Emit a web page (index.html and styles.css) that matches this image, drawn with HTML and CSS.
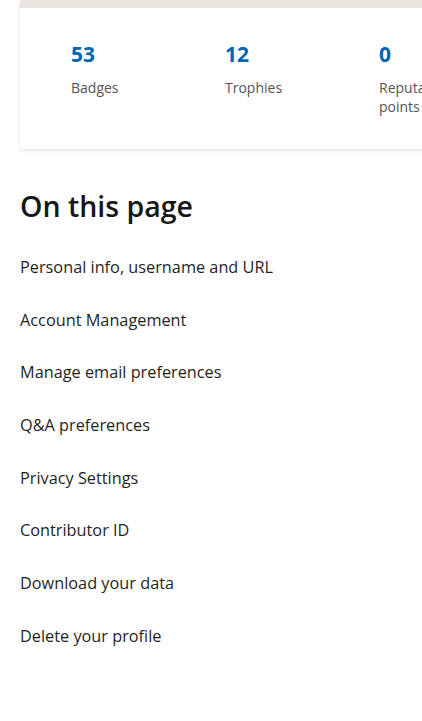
FILE: index.html
```html
<!DOCTYPE html>
<html lang="en">
<head>
<meta charset="utf-8">
<title>Profile</title>
<link rel="stylesheet" href="styles.css">
</head>
<body>
<main class="page">
  <section class="card">
    <div class="banner"></div>
    <div class="stats">
      <div class="stat">
        <div class="stat-value">53</div>
        <div class="stat-label">Badges</div>
      </div>
      <div class="stat">
        <div class="stat-value">12</div>
        <div class="stat-label">Trophies</div>
      </div>
      <div class="stat">
        <div class="stat-value">0</div>
        <div class="stat-label">Reputation points</div>
      </div>
    </div>
  </section>
  <nav class="toc">
    <h2 class="toc-title">On this page</h2>
    <ul class="toc-list">
      <li><a href="#">Personal info, username and URL</a></li>
      <li><a href="#">Account Management</a></li>
      <li><a href="#">Manage email preferences</a></li>
      <li><a href="#">Q&amp;A preferences</a></li>
      <li><a href="#">Privacy Settings</a></li>
      <li><a href="#">Contributor ID</a></li>
      <li><a href="#">Download your data</a></li>
      <li><a href="#">Delete your profile</a></li>
    </ul>
  </nav>
</main>
</body>
</html>
```
FILE: styles.css
```css
html, body {
  margin: 0;
  padding: 0;
  overflow: hidden;
  background: #ffffff;
}
body {
  font-family: "Open Sans", "Noto Sans", sans-serif;
  color: #171717;
  width: 422px;
  height: 721px;
}
.page {
  padding-left: 20px;
}
.card {
  width: 480px;
  background: #ffffff;
  box-shadow: 0 1.6px 3.6px rgba(0,0,0,0.13), 0 0.3px 0.9px rgba(0,0,0,0.11);
}
.banner {
  height: 8px;
  background: #e8e6df;
}
.stats {
  display: grid;
  grid-template-columns: 154px 154px 110px;
  padding: 32px 0 33px 51px;
}
.stat-value {
  font-size: 21px;
  font-weight: 700;
  line-height: 28px;
  color: #0065b3;
}
.stat-label {
  margin-top: 10px;
  font-size: 14px;
  line-height: 19px;
  color: #555555;
  width: 44px;
}
.stat:nth-child(1) .stat-label,
.stat:nth-child(2) .stat-label {
  width: auto;
}
.toc {
  padding-top: 39px;
}
.toc-title {
  margin: 0;
  font-size: 28.5px;
  font-weight: 600;
  line-height: 36px;
  color: #171717;
}
.toc-list {
  list-style: none;
  margin: 31px 0 0;
  padding: 0;
}
.toc-list li {
  height: 52.7px;
}
.toc-list a {
  display: block;
  font-size: 16.3px;
  line-height: 24px;
  color: #1f1f1f;
  text-decoration: none;
}
```
